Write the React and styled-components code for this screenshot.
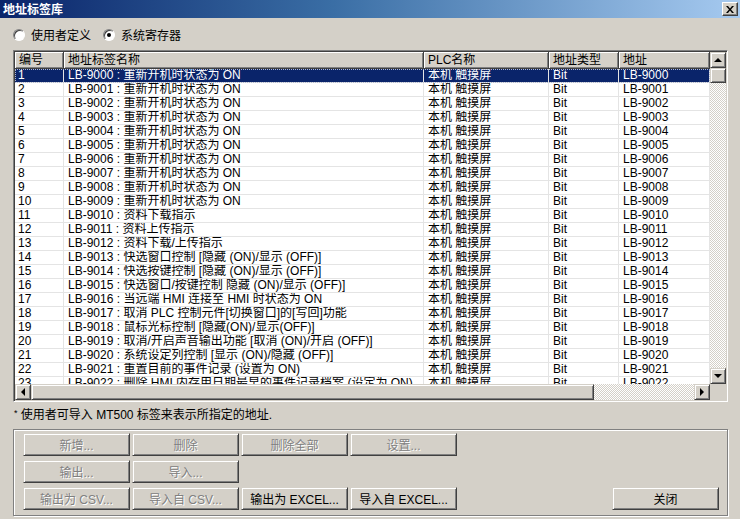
import React from "react";
import styled, { createGlobalStyle } from "styled-components";

const GlobalStyle = createGlobalStyle`
  html, body {
    margin: 0;
    padding: 0;
    background: #d4d0c8;
  }
  body {
    font-family: "Liberation Sans", "Noto Sans CJK SC", sans-serif;
    font-size: 12px;
    color: #000;
  }
`;

const COLS = "49px 360px 125px 70px 91px";

const names = [
  "重新开机时状态为 ON",
  "重新开机时状态为 ON",
  "重新开机时状态为 ON",
  "重新开机时状态为 ON",
  "重新开机时状态为 ON",
  "重新开机时状态为 ON",
  "重新开机时状态为 ON",
  "重新开机时状态为 ON",
  "重新开机时状态为 ON",
  "重新开机时状态为 ON",
  "资料下载指示",
  "资料上传指示",
  "资料下载/上传指示",
  "快选窗口控制 [隐藏 (ON)/显示 (OFF)]",
  "快选按键控制 [隐藏 (ON)/显示 (OFF)]",
  "快选窗口/按键控制 隐藏 (ON)/显示 (OFF)]",
  "当远端 HMI 连接至 HMI 时状态为 ON",
  "取消 PLC 控制元件[切换窗口]的[写回]功能",
  "鼠标光标控制 [隐藏(ON)/显示(OFF)]",
  "取消/开启声音输出功能 [取消 (ON)/开启 (OFF)]",
  "系统设定列控制 [显示 (ON)/隐藏 (OFF)]",
  "重置目前的事件记录 (设置为 ON)",
  "删除 HMI 内存用日期最早的事件记录档案 (设定为 ON)",
];

const rows = names.map((n, i) => ({
  no: i + 1,
  addr: `LB-${9000 + i}`,
  name: n,
}));

const App = () => {
  return (
    <Dialog>
      <GlobalStyle />
      <TitleBar>
        <Title>地址标签库</Title>
        <CloseBtn>
          <svg width="8" height="7" viewBox="0 0 8 7">
            <path d="M0 0h2l2 2.5L6 0h2L5 3.5 8 7H6L4 4.5 2 7H0l3-3.5z" fill="#000" />
          </svg>
        </CloseBtn>
      </TitleBar>

      <Body>
        <RadioRow>
          <RadioLabel>
            <Radio />
            使用者定义
          </RadioLabel>
          <RadioLabel>
            <Radio checked />
            系统寄存器
          </RadioLabel>
        </RadioRow>

        <ListBox>
          <TableArea>
            <HeaderRow>
              <HeaderCell>编号</HeaderCell>
              <HeaderCell>地址标签名称</HeaderCell>
              <HeaderCell>PLC名称</HeaderCell>
              <HeaderCell>地址类型</HeaderCell>
              <HeaderCell>地址</HeaderCell>
            </HeaderRow>
            {rows.map((r) => (
              <Row key={r.no} selected={r.no === 1}>
                <Cell>{r.no}</Cell>
                <Cell>
                  {r.addr} : {r.name}
                </Cell>
                <Cell>本机 触摸屏</Cell>
                <Cell>Bit</Cell>
                <Cell>{r.addr}</Cell>
              </Row>
            ))}
          </TableArea>
          <VScroll>
            <ArrowBtn>
              <Tri dir="up" />
            </ArrowBtn>
            <Thumb h={15} />
            <Track />
            <ArrowBtn>
              <Tri dir="down" />
            </ArrowBtn>
          </VScroll>
          <HScroll>
            <ArrowBtn>
              <Tri dir="left" />
            </ArrowBtn>
            <Thumb w={563} />
            <Track />
            <ArrowBtn>
              <Tri dir="right" />
            </ArrowBtn>
          </HScroll>
          <Corner />
        </ListBox>

        <Note>
          <sup>*</sup> 使用者可导入 MT500 标签来表示所指定的地址.
        </Note>

        <GroupBox>
          <BtnRow>
            <Button disabled>新增...</Button>
            <Button disabled>删除</Button>
            <Button disabled>删除全部</Button>
            <Button disabled>设置...</Button>
          </BtnRow>
          <BtnRow>
            <Button disabled>输出...</Button>
            <Button disabled>导入...</Button>
          </BtnRow>
          <BtnRow>
            <Button disabled>输出为 CSV...</Button>
            <Button disabled>导入自 CSV...</Button>
            <Button>输出为 EXCEL...</Button>
            <Button>导入自 EXCEL...</Button>
            <Spacer />
            <Button>关闭</Button>
          </BtnRow>
        </GroupBox>
      </Body>
    </Dialog>
  );
};

const Dialog = styled.div`
  width: 741px;
  height: 519px;
  background: #d4d0c8;
  overflow: hidden;
  box-sizing: border-box;
  border-right: 1px solid #fff;
`;

const TitleBar = styled.div`
  height: 18px;
  display: flex;
  align-items: center;
  justify-content: space-between;
  padding: 0 2px 0 3px;
  background: linear-gradient(to right, #0a246a 0%, #3a6ea5 45%, #a6caf0 100%);
`;

const Title = styled.div`
  color: #fff;
  font-weight: bold;
  font-size: 12px;
  line-height: 18px;
  font-family: "Noto Sans CJK SC", sans-serif;
`;

const CloseBtn = styled.div`
  width: 14px;
  height: 12px;
  background: #d4d0c8;
  border: 1px solid;
  border-color: #fff #404040 #404040 #fff;
  box-shadow: inset -1px -1px #808080;
  display: flex;
  align-items: center;
  justify-content: center;
`;

const Body = styled.div`
  padding: 0 12px 0 13px;
  display: flex;
  flex-direction: column;
`;

const RadioRow = styled.div`
  display: flex;
  gap: 12px;
  margin-top: 10px;
  height: 14px;
`;

const RadioLabel = styled.label`
  display: flex;
  align-items: center;
  gap: 6px;
  font-family: "Noto Sans CJK SC", sans-serif;
  font-size: 12px;
  line-height: 14px;
`;

const Radio = styled.span`
  width: 12px;
  height: 12px;
  box-sizing: border-box;
  border-radius: 50%;
  background: #fff;
  border: 1px solid;
  border-color: #808080 #fff #fff #808080;
  box-shadow: inset 1px 1px #404040;
  display: flex;
  align-items: center;
  justify-content: center;
  &::after {
    content: "";
    width: 4px;
    height: 4px;
    border-radius: 50%;
    background: ${(p) => (p.checked ? "#000" : "transparent")};
  }
`;

const ListBox = styled.div`
  margin-top: 8px;
  width: 715px;
  height: 352px;
  box-sizing: border-box;
  border: 1px solid;
  border-color: #808080 #fff #fff #808080;
  box-shadow: inset 1px 1px #404040, inset -1px -1px #d4d0c8;
  padding: 1px;
  display: grid;
  grid-template-columns: 695px 16px;
  grid-template-rows: 332px 16px;
  background: #fff;
`;

const TableArea = styled.div`
  overflow: hidden;
  background: #fff;
`;

const HeaderRow = styled.div`
  display: grid;
  grid-template-columns: ${COLS};
  height: 17px;
`;

const HeaderCell = styled.div`
  box-sizing: border-box;
  background: #d4d0c8;
  border-right: 1px solid #404040;
  border-bottom: 1px solid #404040;
  box-shadow: inset 1px 1px #fff, inset -1px -1px #808080;
  padding-left: 4px;
  line-height: 16px;
  white-space: nowrap;
  overflow: hidden;
`;

const Row = styled.div`
  display: grid;
  grid-template-columns: ${COLS};
  height: 14px;
  background: ${(p) => (p.selected ? "#0a246a" : "#fff")};
  color: ${(p) => (p.selected ? "#fff" : "#000")};
  outline: ${(p) => (p.selected ? "1px dotted #b0b8d0" : "none")};
  outline-offset: -1px;
`;

const Cell = styled.div`
  box-sizing: border-box;
  border-right: 1px solid #e4e4e4;
  border-bottom: 1px solid #e4e4e4;
  padding-left: 4px;
  line-height: 13px;
  white-space: nowrap;
  overflow: hidden;
  &:first-child {
    padding-left: 3px;
  }
`;

const checker = `repeating-conic-gradient(#fff 0 25%, #d4d0c8 0 50%) 0 0 / 2px 2px`;

const VScroll = styled.div`
  display: flex;
  flex-direction: column;
  background: ${checker};
`;

const HScroll = styled.div`
  display: flex;
  background: ${checker};
`;

const Corner = styled.div`
  background: #d4d0c8;
`;

const Track = styled.div`
  flex: 1;
`;

const raised = `
  box-sizing: border-box;
  background: #d4d0c8;
  border: 1px solid;
  border-color: #d4d0c8 #404040 #404040 #d4d0c8;
  box-shadow: inset 1px 1px #fff, inset -1px -1px #808080;
`;

const ArrowBtn = styled.div`
  ${raised}
  width: 16px;
  height: 16px;
  flex: none;
  display: flex;
  align-items: center;
  justify-content: center;
`;

const Thumb = styled.div`
  ${raised}
  flex: none;
  width: ${(p) => (p.w ? `${p.w}px` : "16px")};
  height: ${(p) => (p.h ? `${p.h}px` : "16px")};
`;

const Tri = styled.span`
  width: 0;
  height: 0;
  border-style: solid;
  ${(p) =>
    p.dir === "up"
      ? "border-width: 0 4px 4px 4px; border-color: transparent transparent #000 transparent;"
      : p.dir === "down"
      ? "border-width: 4px 4px 0 4px; border-color: #000 transparent transparent transparent;"
      : p.dir === "left"
      ? "border-width: 4px 4px 4px 0; border-color: transparent #000 transparent transparent;"
      : "border-width: 4px 0 4px 4px; border-color: transparent transparent transparent #000;"}
`;

const Note = styled.div`
  margin-top: 6px;
  margin-left: 1px;
  line-height: 14px;
  font-size: 12px;
  sup {
    font-size: 9px;
    vertical-align: 3px;
    line-height: 0;
  }
`;

const GroupBox = styled.div`
  margin-top: 7px;
  width: 715px;
  height: 87px;
  box-sizing: border-box;
  border: 1px solid #808080;
  box-shadow: inset 1px 1px #fff, 1px 1px #fff;
  padding: 3px 8px 0 9px;
  display: flex;
  flex-direction: column;
  gap: 4px;
`;

const BtnRow = styled.div`
  display: flex;
  gap: 2px;
`;

const Spacer = styled.div`
  flex: 1;
`;

const Button = styled.div`
  ${raised}
  width: 107px;
  height: 23px;
  display: flex;
  align-items: center;
  justify-content: center;
  font-size: 12px;
  white-space: nowrap;
  color: ${(p) => (p.disabled ? "#808080" : "#000")};
  text-shadow: ${(p) => (p.disabled ? "1px 1px #fff" : "none")};
`;

export default App;
